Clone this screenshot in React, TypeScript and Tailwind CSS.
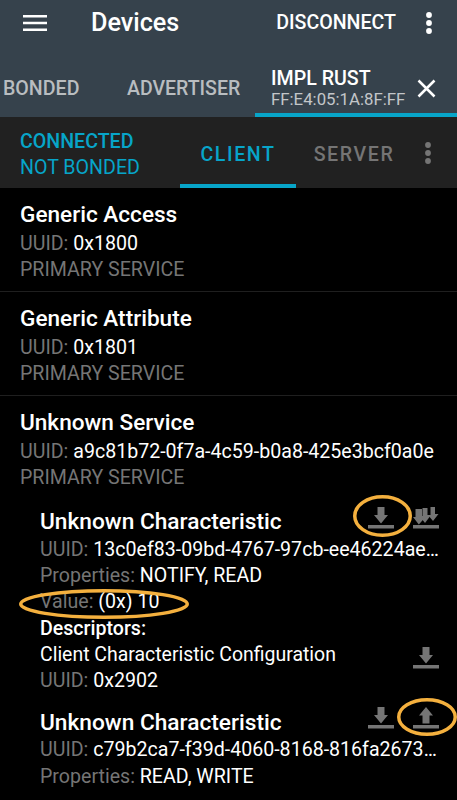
import React from "react";

const DownloadIcon = ({ up = false }: { up?: boolean }) => (
  <svg width="26" height="22" viewBox="0 0 26 22" fill="#757575">
    {up ? <path d="M9.500 16.500h7V8.500h3.500L13 0 6 8.500h3.500z" /> : <path d="M9.500 0h7v8h3.500L13 16.500 6 8h3.500z" />}
    <rect x="0" y="18" width="26" height="3.500" />
  </svg>
);

const DownloadManyIcon = () => (
  <svg width="26" height="22" viewBox="0 0 26 22" fill="#757575">
    <path d="M17.500 0h4.500v7h3.500l-5.500 7-5-6h2.500z" />
    <path d="M9.500 1h5v7h3.500l-6 8-5.500-7h3z" />
    <path d="M2.500 2h6.500v8h3.500L5.800 17.500 0 10h2.500z" />
    <rect x="0" y="18" width="26" height="3.500" />
  </svg>
);

const Dots = ({ color }: { color: string }) => (
  <svg width="8" height="24" viewBox="0 0 8 24" fill={color}>
    <circle cx="4" cy="4" r="2.900" />
    <circle cx="4" cy="12" r="2.900" />
    <circle cx="4" cy="20" r="2.900" />
  </svg>
);

const Ellipse = ({ className, w, h }: { className: string; w: number; h: number }) => (
  <svg className={`absolute ${className}`} width={w} height={h} viewBox={`0 0 ${w} ${h}`} fill="none">
    <ellipse cx={w / 2} cy={h / 2} rx={w / 2 - 1.75} ry={h / 2 - 1.75} stroke="#f4b03e" strokeWidth="3.500" />
  </svg>
);

const Service = ({ name, uuid }: { name: string; uuid: string }) => (
  <div className="px-5 pt-[13px] h-[104px] border-b border-[#1f1f1f]">
    <div className="text-[22.600px] leading-[28px] font-medium text-white">{name}</div>
    <div className="text-[19.600px] leading-[26px] text-[#757575] mt-[2px] whitespace-nowrap">
      UUID: <span className="text-white">{uuid}</span>
    </div>
    <div className="text-[19.600px] leading-[26px] text-[#757575]">PRIMARY SERVICE</div>
  </div>
);

export default function App() {
  return (
    <div className="relative w-[457px] h-[800px] overflow-hidden bg-black font-['Roboto',sans-serif]">
      <header className="bg-[#36424c] h-[117px] flex flex-col">
        <div className="h-[45px] flex items-center">
          <svg className="ml-[23px]" width="24" height="16" viewBox="0 0 24 16" fill="#fff">
            <rect y="0" width="24" height="2.500" />
            <rect y="6.750" width="24" height="2.500" />
            <rect y="13.500" width="24" height="2.500" />
          </svg>
          <div className="ml-[44px] text-[25.200px] font-medium text-white">Devices</div>
          <div className="ml-auto text-[19.600px] font-medium text-white">DISCONNECT</div>
          <div className="ml-[29px] mr-[24px]"><Dots color="#fff" /></div>
        </div>
        <div className="flex-1 flex items-end">
          <div className="w-[127px] pl-[3px] h-[61px] flex items-center pt-[4px] text-[19.600px] font-medium text-[#b9bdc0]">BONDED</div>
          <div className="w-[128px] h-[61px] flex items-center pt-[4px] text-[19.500px] font-medium text-[#b9bdc0]">ADVERTISER</div>
          <div className="flex-1 h-[61px] border-b-4 border-[#07a5c9] pl-[16px] pt-[8px] flex items-center">
            <div className="flex flex-col">
              <span className="text-[19.600px] leading-[21px] font-medium text-white">IMPL RUST</span>
              <span className="text-[16.800px] leading-[21px] text-[#c3c6c9]">FF:E4:05:1A:8F:FF</span>
            </div>
            <svg className="ml-auto mr-[21px]" width="19" height="19" viewBox="0 0 19 19" stroke="#fff" strokeWidth="2.500">
              <path d="M1.500 1.500l16 16M17.500 1.500l-16 16" />
            </svg>
          </div>
        </div>
      </header>
      <div className="h-[71px] bg-[#212121] flex">
        <div className="w-[180px] pl-[20px] pt-[5px] flex flex-col justify-center">
          <span className="text-[19.600px] leading-[26px] font-medium text-[#07a5c9]">CONNECTED</span>
          <span className="text-[19.600px] leading-[26px] text-[#07a5c9]">NOT BONDED</span>
        </div>
        <div className="w-[116px] border-b-4 border-[#07a5c9] pt-[8px] flex items-center justify-center text-[19.600px] font-medium tracking-[1.600px] text-[#07a5c9]">CLIENT</div>
        <div className="w-[116px] pt-[5px] flex items-center justify-center text-[19.600px] font-medium tracking-[1.600px] text-[#757575]">SERVER</div>
        <div className="flex-1 flex items-center pl-[12px]"><Dots color="#757575" /></div>
      </div>
      <main className="bg-black">
        <Service name="Generic Access" uuid="0x1800" />
        <Service name="Generic Attribute" uuid="0x1801" />
        <div className="px-5 pt-[13px]">
          <div className="text-[22.600px] leading-[28px] font-medium text-white">Unknown Service</div>
          <div className="text-[19.600px] leading-[26px] text-[#757575] mt-[2px] whitespace-nowrap">
            UUID: <span className="text-white">a9c81b72-0f7a-4c59-b0a8-425e3bcf0a0e</span>
          </div>
          <div className="text-[19.600px] leading-[26px] text-[#757575]">PRIMARY SERVICE</div>
        </div>
        <section className="pl-[40px] pt-[17px] pr-[18px]">
          <div className="flex items-start">
            <div className="text-[22.700px] leading-[28px] font-medium text-white flex-1">Unknown Characteristic</div>
            <div className="flex gap-[19px] -mt-[1px]"><DownloadIcon /><DownloadManyIcon /></div>
          </div>
          <div className="text-[19.600px] leading-[26.200px] mt-[1px] text-[#757575] whitespace-nowrap">
            UUID: <span className="text-white">13c0ef83-09bd-4767-97cb-ee46224ae…</span>
          </div>
          <div className="text-[19.600px] leading-[26.200px] text-[#757575]">Properties: <span className="text-white">NOTIFY, READ</span></div>
          <div className="text-[19.600px] leading-[26.200px] text-[#757575]">Value: <span className="text-white">(0x) 10</span></div>
          <div className="text-[19.600px] leading-[26.200px] font-medium text-white">Descriptors:</div>
          <div className="flex items-start">
            <div className="flex-1">
              <div className="text-[19.450px] leading-[26.200px] text-white whitespace-nowrap">Client Characteristic Configuration</div>
              <div className="text-[19.600px] leading-[26.200px] text-[#757575]">UUID: <span className="text-white">0x2902</span></div>
            </div>
            <div className="mt-[5px]"><DownloadIcon /></div>
          </div>
          <div className="flex items-start mt-[15px]">
            <div className="text-[22.700px] leading-[28px] font-medium text-white flex-1">Unknown Characteristic</div>
            <div className="flex gap-[19px] -mt-[2px]"><DownloadIcon /><DownloadIcon up /></div>
          </div>
          <div className="text-[19.600px] leading-[26.200px] text-[#757575] whitespace-nowrap">
            UUID: <span className="text-white">c79b2ca7-f39d-4060-8168-816fa2673…</span>
          </div>
          <div className="text-[19.600px] leading-[26.200px] mt-[1px] text-[#757575]">Properties: <span className="text-white">READ, WRITE</span></div>
        </section>
      </main>
      <Ellipse className="left-[353px] top-[495px]" w={59} h={42} />
      <Ellipse className="left-[19px] top-[589px]" w={170} h={30} />
      <Ellipse className="left-[397px] top-[698px]" w={60} h={38} />
    </div>
  );
}
